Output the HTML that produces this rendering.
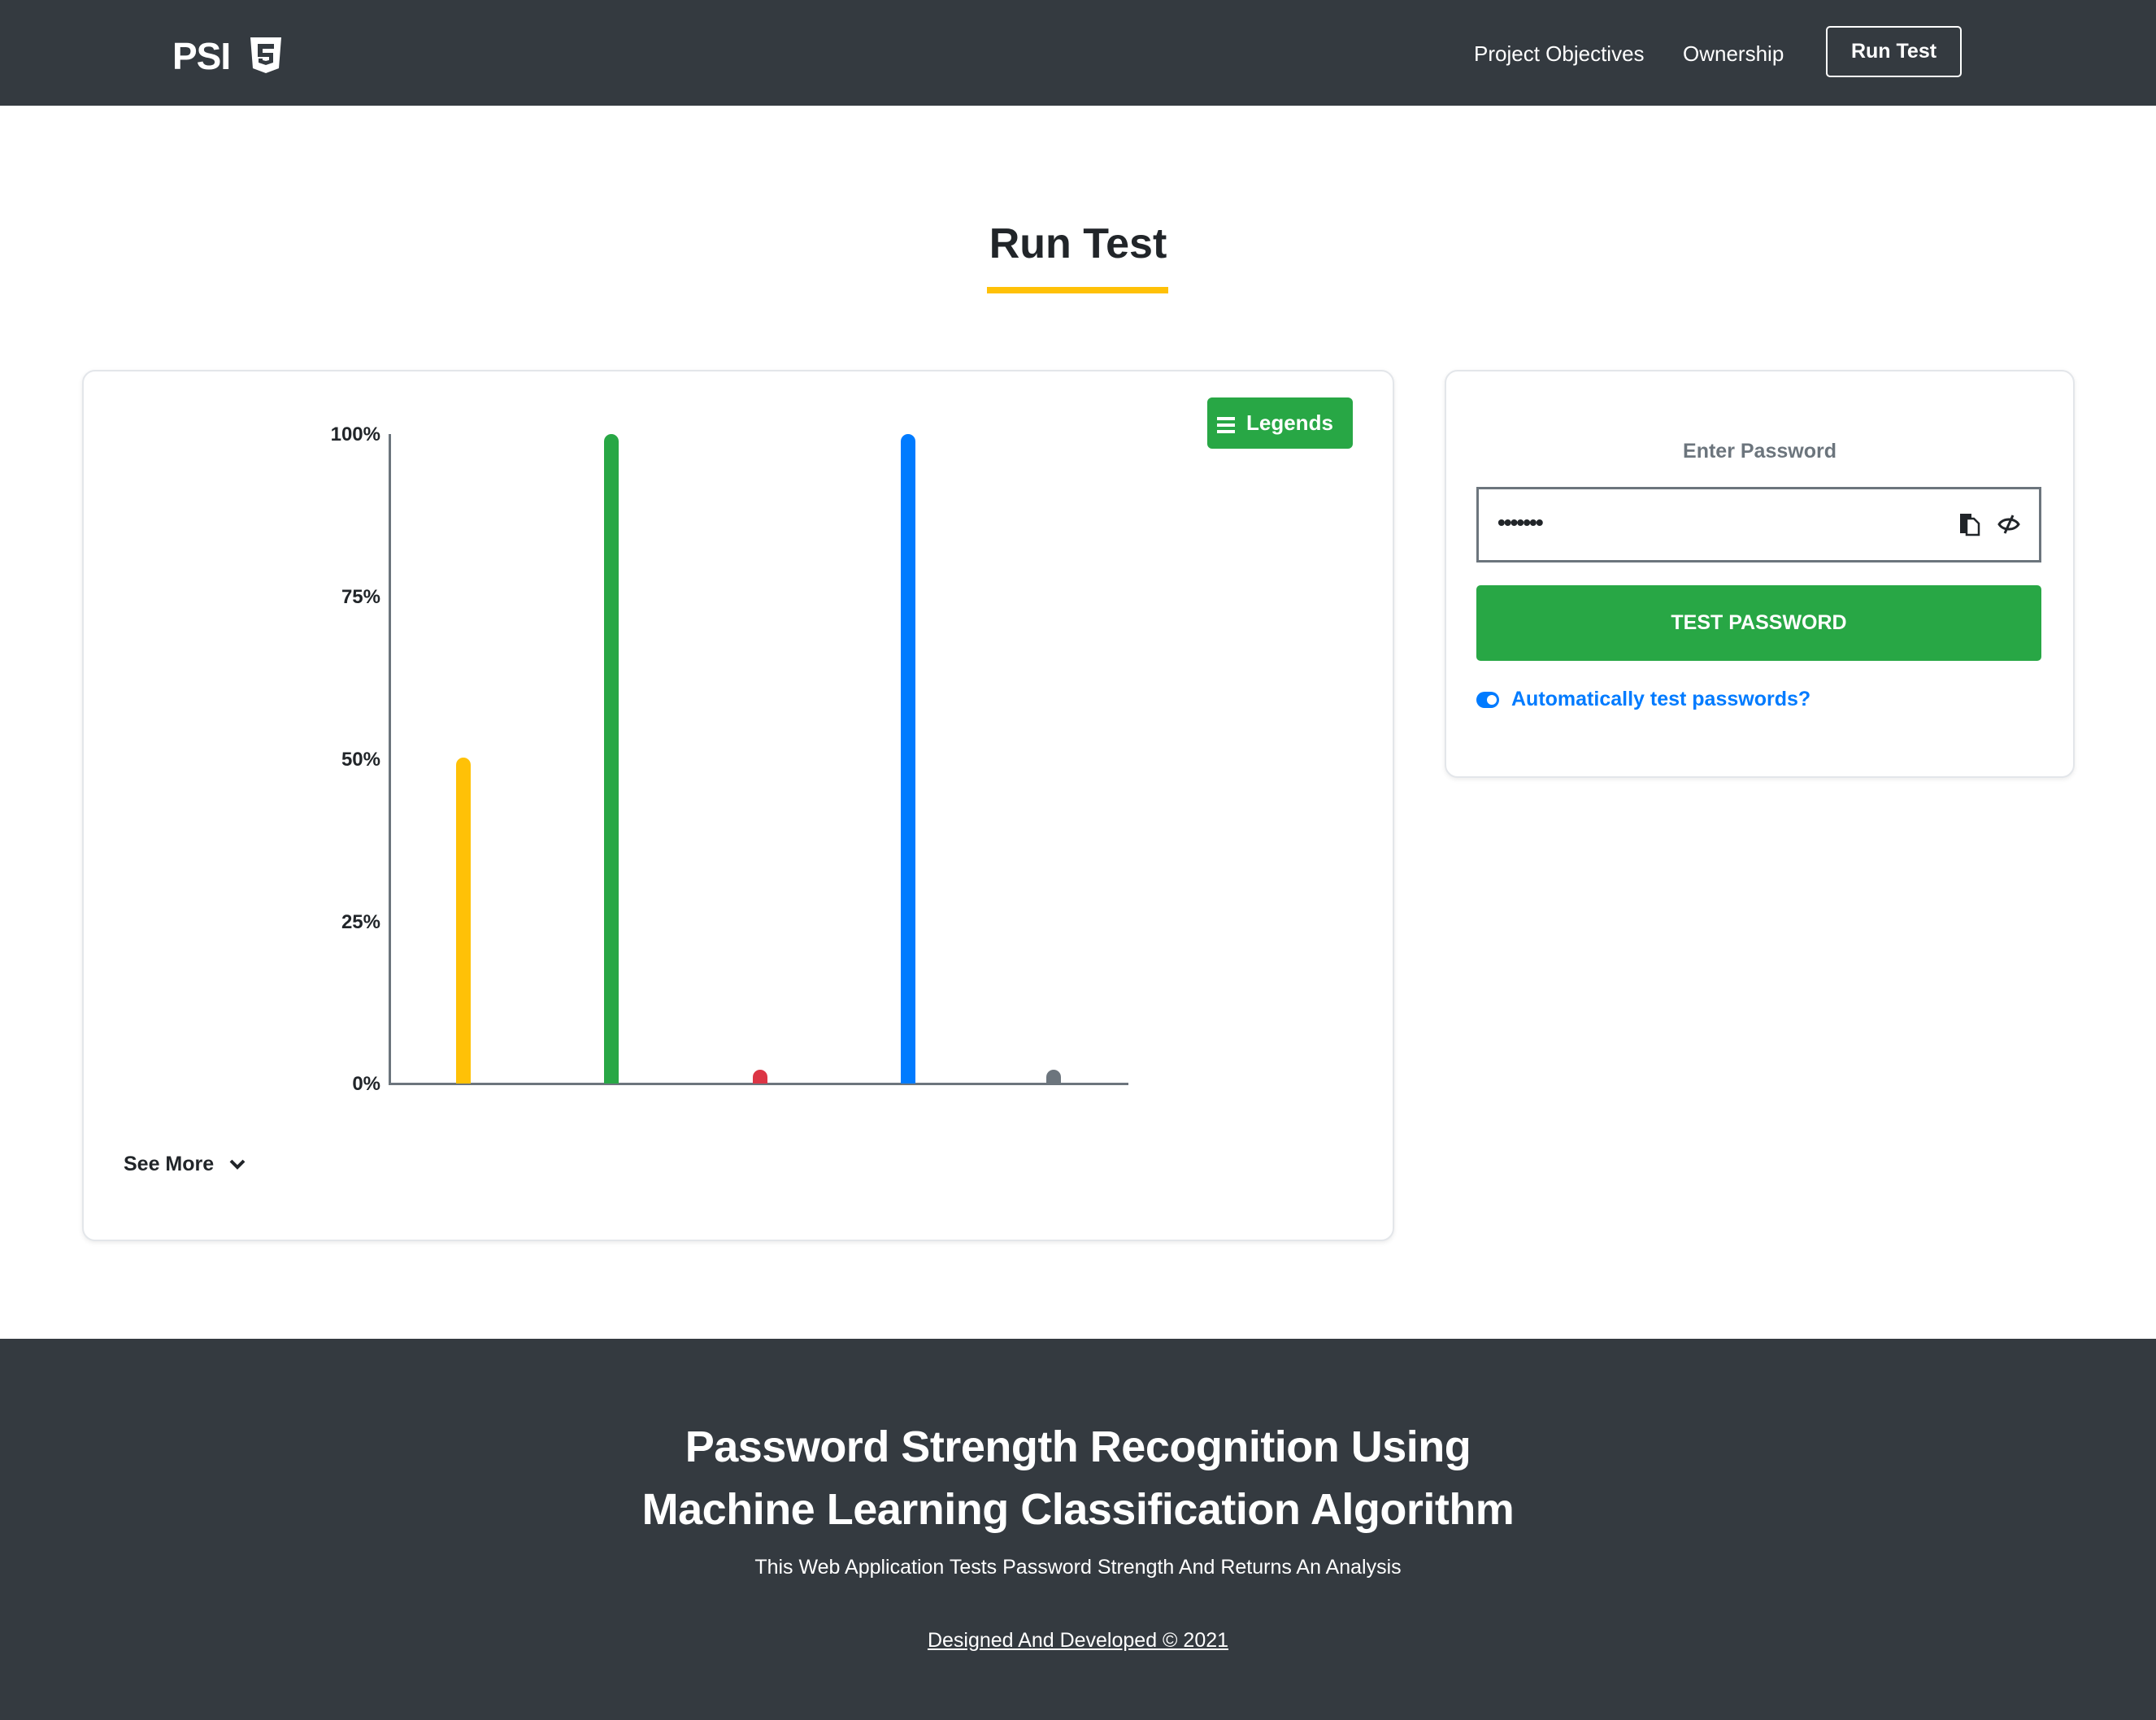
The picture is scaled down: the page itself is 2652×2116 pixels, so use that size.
<!DOCTYPE html>
<html><head><meta charset="utf-8"><style>
*{margin:0;padding:0;box-sizing:border-box}
body{width:2652px;height:2116px;background:#fff;font-family:"Liberation Sans",sans-serif;position:relative;overflow:hidden;color:#212529}
.a{position:absolute}
nav{position:absolute;left:0;top:0;width:2652px;height:130px;background:#343a40}
.lbl{position:absolute;width:120px;text-align:right;left:348px;font-weight:bold;font-size:24px;color:#212529}
.bar{position:absolute;width:18px;border-radius:9px 9px 0 0}
.card{position:absolute;border:2px solid #e3e6ea;border-radius:16px;box-shadow:0 2px 6px rgba(0,0,0,.08);background:#fff}
</style></head><body>
<nav>
 <div class="a" style="left:212px;top:42px;font-size:46px;font-weight:bold;color:#fff;letter-spacing:-1px">PSI</div>
 <svg class="a" style="left:306px;top:44px" width="42" height="48" viewBox="0 0 42 48"><path d="M2 2H40L37 40L21 46L5 40Z" fill="#fff"/><path d="M11 10H31V16H17V21H30V33L21 36L12 33V28H17V30L21 31L25 30V26H11Z" fill="#343a40"/></svg>
 <div class="a" style="left:1813px;top:51px;font-size:26px;color:#fff">Project Objectives</div>
 <div class="a" style="left:2070px;top:51px;font-size:26px;color:#fff">Ownership</div>
 <div class="a" style="left:2246px;top:32px;width:167px;height:63px;border:2px solid #fff;border-radius:5px;color:#fff;font-weight:bold;font-size:25px;text-align:center;line-height:59px">Run Test</div>
</nav>
<div class="a" style="left:1126px;top:270px;width:400px;text-align:center;font-size:52px;font-weight:bold;color:#212529">Run Test</div>
<div class="a" style="left:1214px;top:353px;width:223px;height:8px;background:#ffc107"></div>

<div class="card" style="left:101px;top:455px;width:1614px;height:1072px"></div>
<div class="lbl" style="top:521px">100%</div>
<div class="lbl" style="top:721px">75%</div>
<div class="lbl" style="top:921px">50%</div>
<div class="lbl" style="top:1121px">25%</div>
<div class="lbl" style="top:1320px">0%</div>
<div class="a" style="left:478px;top:534px;width:3px;height:801px;background:#6c757d"></div>
<div class="a" style="left:478px;top:1332px;width:910px;height:3px;background:#6c757d"></div>
<div class="bar" style="left:561px;top:932px;height:401px;background:#ffc107"></div>
<div class="bar" style="left:743px;top:534px;height:799px;background:#28a745"></div>
<div class="bar" style="left:926px;top:1316px;height:17px;background:#dc3545"></div>
<div class="bar" style="left:1108px;top:534px;height:799px;background:#007bff"></div>
<div class="bar" style="left:1287px;top:1316px;height:17px;background:#6c757d"></div>
<div class="a" style="left:1485px;top:489px;width:179px;height:63px;background:#28a745;border-radius:6px;color:#fff;font-weight:bold;font-size:26px;line-height:63px;padding-left:48px">Legends</div>
<div class="a" style="left:1497px;top:513px;width:22px;height:4px;background:#fff;box-shadow:0 8px 0 #fff,0 16px 0 #fff"></div>
<div class="a" style="left:152px;top:1418px;font-size:25px;font-weight:bold">See More</div>
<svg class="a" style="left:281px;top:1424px" width="22" height="18" viewBox="0 0 22 18"><path d="M3 4L11 12L19 4" stroke="#212529" stroke-width="4" fill="none"/></svg>

<div class="card" style="left:1777px;top:455px;width:775px;height:502px"></div>
<div class="a" style="left:1777px;top:541px;width:775px;text-align:center;font-size:25px;font-weight:bold;color:#6c757d">Enter Password</div>
<div class="a" style="left:1816px;top:599px;width:695px;height:93px;border:3px solid #6c757d"></div>
<div class="a" style="left:1842px;top:627px;font-size:28px;font-weight:bold;letter-spacing:-2px">•••••••</div>
<svg class="a" style="left:2408px;top:630px" width="30" height="30" viewBox="0 0 30 30"><rect x="3" y="2" width="14" height="24" fill="#212529"/><path d="M11 8H20L26 14V28H11Z" fill="#fff" stroke="#212529" stroke-width="2.5"/></svg>
<svg class="a" style="left:2456px;top:630px" width="30" height="30" viewBox="0 0 30 30"><path d="M3 15C8 7 22 7 27 15C22 23 8 23 3 15Z" fill="none" stroke="#212529" stroke-width="3"/><path d="M20 4L10 26" stroke="#212529" stroke-width="3"/></svg>
<div class="a" style="left:1816px;top:720px;width:695px;height:93px;background:#28a745;border-radius:5px;color:#fff;font-weight:bold;font-size:25px;text-align:center;line-height:93px">TEST PASSWORD</div>
<div class="a" style="left:1816px;top:851px;width:28px;height:20px;border-radius:10px;background:#007bff"></div>
<div class="a" style="left:1829px;top:855px;width:12px;height:12px;border-radius:6px;background:#fff"></div>
<div class="a" style="left:1859px;top:846px;font-size:25px;font-weight:bold;color:#007bff">Automatically test passwords?</div>

<div class="a" style="left:0;top:1647px;width:2652px;height:469px;background:#343a40"></div>
<div class="a" style="left:0;top:1742px;width:2652px;text-align:center;color:#fff;font-weight:bold;font-size:54px;line-height:77px;letter-spacing:-0.5px">Password Strength Recognition Using<br>Machine Learning Classification Algorithm</div>
<div class="a" style="left:0;top:1914px;width:2652px;text-align:center;color:#fff;font-size:25px">This Web Application Tests Password Strength And Returns An Analysis</div>
<div class="a" style="left:0;top:2004px;width:2652px;text-align:center;color:#fff;font-size:25px;text-decoration:underline">Designed And Developed © 2021</div>
</body></html>
